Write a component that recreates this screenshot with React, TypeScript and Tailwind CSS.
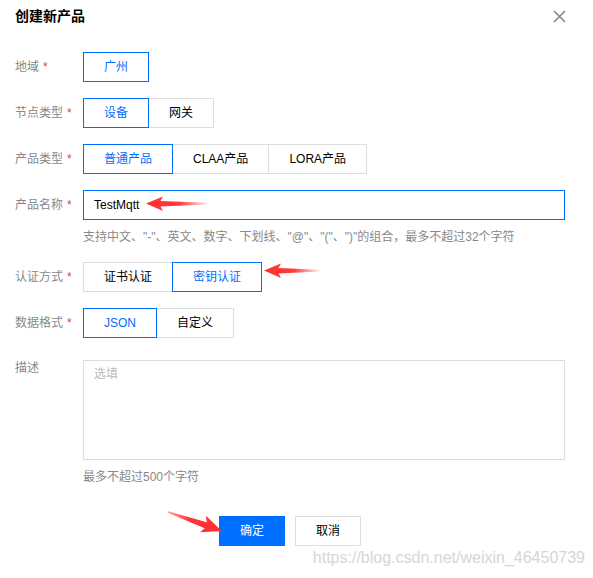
import React from "react";

const FONT = "font-['Liberation_Sans','Noto_Sans_CJK_SC',sans-serif]";

function Req() {
  return <span className="ml-[4px] text-[#e54545]">*</span>;
}

function Label({ text, req = true, top = false }: { text: string; req?: boolean; top?: boolean }) {
  return (
    <div
      className={`w-[68px] shrink-0 text-[12px] leading-[16px] text-[#888] ${top ? "self-start" : ""}`}
    >
      {text}
      {req && <Req />}
    </div>
  );
}

function Seg({ items, active }: { items: string[]; active: number }) {
  return (
    <div className="flex">
      {items.map((it, i) => (
        <div
          key={it}
          className={`relative flex h-[30px] items-center justify-center border px-[20px] text-[12px] ${
            i > 0 ? "-ml-px" : ""
          } ${i === active ? "z-10 border-[#006eff] text-[#006eff]" : "border-[#dddddd] text-[#000]"}`}
        >
          {it}
        </div>
      ))}
    </div>
  );
}

function ArrowLeft({ left, top, w }: { left: number; top: number; w: number }) {
  const id = `g${left}`;
  return (
    <svg
      className="absolute"
      style={{ left, top }}
      width={w}
      height={16}
      viewBox={`0 0 ${w} 16`}
    >
      <defs>
        <linearGradient id={id} x1="0" y1="0" x2="1" y2="0">
          <stop offset="0" stopColor="#ff3030" />
          <stop offset="0.55" stopColor="#ff3a3a" />
          <stop offset="1" stopColor="#ff4a4a" stopOpacity="0.15" />
        </linearGradient>
      </defs>
      <polygon
        points={`0,7.5 17,0.5 14.5,5 ${w},6.8 ${w},8.4 14.5,10.5 17,15`}
        fill={`url(#${id})`}
      />
    </svg>
  );
}

function ArrowDiag() {
  return (
    <svg className="absolute" style={{ left: 160, top: 500 }} width={70} height={45} viewBox="0 0 70 45">
      <defs>
        <linearGradient id="gd" x1="0" y1="0" x2="1" y2="0">
          <stop offset="0" stopColor="#ff4a4a" stopOpacity="0.5" />
          <stop offset="0.4" stopColor="#ff3535" />
          <stop offset="1" stopColor="#ff3030" />
        </linearGradient>
      </defs>
      <g transform="translate(8,12) rotate(19.4)">
        <polygon points="0,-0.8 40,-3.2 37,-9 57,0 37,8.5 40,3.2 0,0.8" fill="url(#gd)" />
      </g>
    </svg>
  );
}

export default function App() {
  return (
    <div className={`relative h-[578px] w-[593px] overflow-hidden bg-white ${FONT}`}>
      {/* header */}
      <div className="flex items-center justify-between pl-[15px] pr-[27px] pt-[6px]">
        <div className="text-[14px] font-semibold leading-[20px] text-[#000]">创建新产品</div>
        <svg width="13" height="13" viewBox="0 0 13 13">
          <path d="M1 1 L12 12 M12 1 L1 12" stroke="#888" strokeWidth="1.6" />
        </svg>
      </div>

      {/* form */}
      <div className="mt-[26px] flex flex-col pl-[15px]">
        <div className="flex items-center">
          <Label text="地域" />
          <Seg items={["广州"]} active={0} />
        </div>

        <div className="mt-[16px] flex items-center">
          <Label text="节点类型" />
          <Seg items={["设备", "网关"]} active={0} />
        </div>

        <div className="mt-[16px] flex items-center">
          <Label text="产品类型" />
          <Seg items={["普通产品", "CLAA产品", "LORA产品"]} active={0} />
        </div>

        <div className="mt-[16px] flex flex-col">
          <div className="flex items-center">
            <Label text="产品名称" />
            <div className="flex h-[30px] w-[482px] items-center border border-[#006eff] pl-[10px] text-[12px] text-[#000]">
              TestMqtt
            </div>
          </div>
          <div className="mt-[8px] pl-[68px] text-[12px] leading-[18px] text-[#888]">
            支持中文、"-"、英文、数字、下划线、"@"、"("、")"的组合，最多不超过32个字符
          </div>
        </div>

        <div className="mt-[16px] flex items-center">
          <Label text="认证方式" />
          <Seg items={["证书认证", "密钥认证"]} active={1} />
        </div>

        <div className="mt-[16px] flex items-center">
          <Label text="数据格式" />
          <Seg items={["JSON", "自定义"]} active={0} />
        </div>

        <div className="mt-[22px] flex flex-col">
          <div className="flex">
            <Label text="描述" req={false} top />
            <div className="h-[100px] w-[482px] border border-[#dddddd] px-[10px] pt-[5px] text-[12px] leading-[16px] text-[#bbbbbb]">
              选填
            </div>
          </div>
          <div className="mt-[8px] pl-[68px] text-[12px] leading-[18px] text-[#888]">
            最多不超过500个字符
          </div>
        </div>

        <div className="mt-[30px] flex gap-[10px] pl-[204px]">
          <div className="flex h-[30px] w-[66px] items-center justify-center bg-[#006eff] text-[12px] text-white">
            确定
          </div>
          <div className="flex h-[30px] w-[66px] items-center justify-center border border-[#dddddd] text-[12px] text-[#000]">
            取消
          </div>
        </div>
      </div>

      {/* watermark */}
      <div className="absolute right-[8px] top-[548px] text-[16px] leading-[20px] text-[#d6d6d6]">
        https://blog.csdn.net/weixin_46450739
      </div>

      {/* annotation arrows */}
      <ArrowLeft left={146} top={196} w={61} />
      <ArrowLeft left={264} top={263} w={55} />
      <ArrowDiag />
    </div>
  );
}
